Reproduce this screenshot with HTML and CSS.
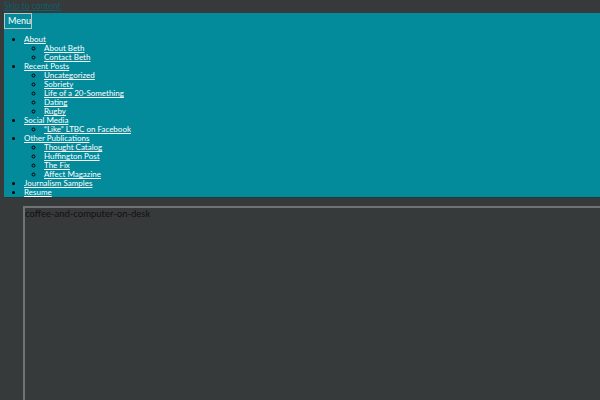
FILE: index.html
```html
<!DOCTYPE html>
<html>
<head>
<meta charset="utf-8">
<link rel="stylesheet" href="styles.css">
</head>
<body>
<a class="skip" href="#content">Skip to content</a>
<nav class="nav">
  <button class="menu-btn">Menu</button>
  <ul class="menu">
    <li><a href="#">About</a>
      <ul class="sub">
        <li><a href="#">About Beth</a></li>
        <li><a href="#">Contact Beth</a></li>
      </ul>
    </li>
    <li><a href="#">Recent Posts</a>
      <ul class="sub">
        <li><a href="#">Uncategorized</a></li>
        <li><a href="#">Sobriety</a></li>
        <li><a href="#">Life of a 20-Something</a></li>
        <li><a href="#">Dating</a></li>
        <li><a href="#">Rugby</a></li>
      </ul>
    </li>
    <li><a href="#">Social Media</a>
      <ul class="sub">
        <li><a href="#">“Like” LTBC on Facebook</a></li>
      </ul>
    </li>
    <li><a href="#">Other Publications</a>
      <ul class="sub">
        <li><a href="#">Thought Catalog</a></li>
        <li><a href="#">Huffington Post</a></li>
        <li><a href="#">The Fix</a></li>
        <li><a href="#">Affect Magazine</a></li>
      </ul>
    </li>
    <li><a href="#">Journalism Samples</a></li>
    <li><a href="#">Resume</a></li>
  </ul>
</nav>
<main id="content" class="content">
  <div class="img-box">coffee-and-computer-on-desk</div>
</main>
</body>
</html>
```

FILE: styles.css
```css
html, body {
  margin: 0;
  padding: 0;
  height: 100%;
  overflow: hidden;
}
body {
  background: #363a3b;
  font-family: Lato, "Liberation Sans", sans-serif;
  font-size: 8px;
  line-height: 9px;
  padding: 0 0 0 4px;
  box-sizing: border-box;
}
.skip {
  display: block;
  color: #0d5f69;
  font-size: 8.5px;
  line-height: 13px;
  height: 13px;
  text-decoration: underline;
}
.nav {
  background: #038b9c;
  border-bottom: 1px solid #23383c;
  padding: 0;
}
.menu-btn {
  display: block;
  margin: 0;
  padding: 1px 3px 2px;
  background: #038b9c;
  color: #fff;
  border: 1px solid #b9c7c9;
  font-family: Lato, "Liberation Sans", sans-serif;
  font-size: 9px;
  line-height: 11px;
  height: 16px;
  width: 28px;
  text-align: left;
}
.menu {
  list-style: disc;
  margin: 6px 0 0;
  padding: 0 0 0 20px;
  color: #000;
}
.sub {
  list-style: circle;
  margin: 0;
  padding: 0 0 0 20px;
}
.menu a {
  color: #fff;
  text-decoration: underline;
}
.content {
  padding: 8px 0 0 19px;
}
.img-box {
  border: 2px solid #6f7374;
  border-right: none;
  border-bottom: none;
  height: 192px;
  color: #111;
  padding: 1px 0 0 0;
  font-size: 9.5px;
  line-height: 10px;
}
```
